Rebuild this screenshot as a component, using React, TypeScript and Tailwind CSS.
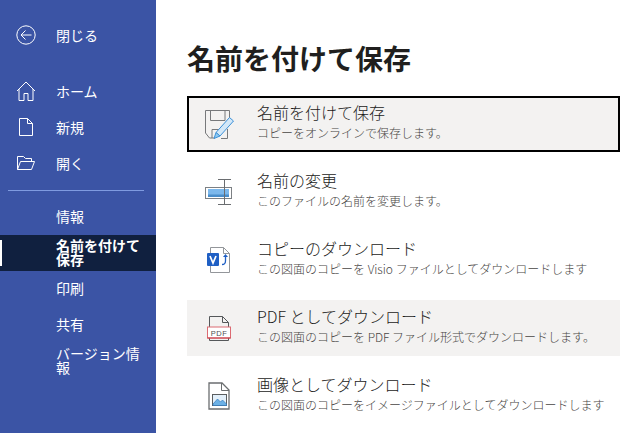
const font = { fontFamily: '"Noto Sans CJK JP", "Noto Sans", sans-serif' };

const stroke = "#ffffff";

const CloseIcon = () => (
  <svg width="20" height="20" viewBox="0 0 20 20" fill="none" stroke={stroke} strokeWidth="1">
    <circle cx="10" cy="10" r="9.2" />
    <path d="M15.500 10H5M9.500 5.500L5 10l4.500 4.500" />
  </svg>
);
const HomeIcon = () => (
  <svg width="20" height="20" viewBox="0 0 20 20" fill="none" stroke={stroke} strokeWidth="1">
    <path d="M1 10L10 1l9 9M3 8v11.500h5v-7h4v7h5V8" />
  </svg>
);
const NewIcon = () => (
  <svg width="16" height="20" viewBox="0 0 16 20" fill="none" stroke={stroke} strokeWidth="1">
    <path d="M1.500 1.500h8l5 5v12h-13zM9.500 1.500v5h5" />
  </svg>
);
const OpenIcon = () => (
  <svg width="20" height="16" viewBox="0 0 20 16" fill="none" stroke={stroke} strokeWidth="1">
    <path d="M1.500 14.500v-13h6l2 2h6v3M1.500 14.500l3-8h14l-3 8z" />
  </svg>
);

const SaveAsIcon = () => (
  <svg width="30" height="30" viewBox="0 0 30 30" fill="none">
    <path d="M1.500 1.500h24V11M1.500 1.500V24l4 5H11" stroke="#77797b" />
    <path d="M6.500 2v9.500H21V2M8 29v-8.500h9M23.500 20v9.500H17" stroke="#77797b" />
    <path d="M25.500 8.500l4 3.500L16 27l-4-3.500z" fill="#d3e8f8" stroke="#3c91d8" />
    <path d="M12 23.500l4 3.500-6 2.500z" fill="#8ec9f0" stroke="#3c91d8" />
  </svg>
);
const RenameIcon = () => (
  <svg width="28" height="28" viewBox="0 0 28 28" fill="none">
    <rect x="0.500" y="9.500" width="26" height="11" fill="#ffffff" stroke="#7c8084" />
    <rect x="3" y="11" width="21" height="8" fill="#7cb8ec" />
    <path d="M3 16.500h21V19H3z" fill="#4a8ecb" />
    <path d="M19.500 1.500v25M13 1.500h13M13 26.500h13" stroke="#6a6d70" />
  </svg>
);
const VisioIcon = () => (
  <svg width="24" height="28" viewBox="0 0 24 28" fill="none">
    <path d="M3.500 1.500h13l6 6v19h-19z" fill="#ffffff" stroke="#93969a" />
    <path d="M16.500 1.500v6h6" stroke="#93969a" />
    <rect x="0" y="7" width="12" height="13" rx="1" fill="#1f5fc4" />
    <path d="M3 10l3 7 3-7" stroke="#ffffff" strokeWidth="1.700" />
    <path d="M16 11l2.500-3 2.500 3z" fill="#1f5fc4" />
    <path d="M18.500 10v5c0 2-1 3.500-3.500 3.500" stroke="#1f5fc4" strokeWidth="1.300" />
  </svg>
);
const PdfIcon = () => (
  <svg width="24" height="27" viewBox="0 0 24 27" fill="none">
    <path d="M2.500 12V1.500h13l6 6V12M15.500 1.500v6h6M2.500 23v2.500h19V23" stroke="#55585a" />
    <rect x="0.500" y="12" width="23" height="11" fill="#ffffff" stroke="#dc6a72" />
    <path d="M0.500 23h23" stroke="#c8323e" />
    <text x="12" y="20.500" textAnchor="middle" fontSize="7.500" fontFamily="Liberation Sans" letterSpacing="0.5" fill="#505050">PDF</text>
  </svg>
);
const ImageIcon = () => (
  <svg width="22" height="28" viewBox="0 0 22 28" fill="none">
    <path d="M1 1h13l7 7v19H1z" fill="#ffffff" stroke="#6b6e70" strokeWidth="1.300" />
    <path d="M13.500 1v7.500H21" stroke="#6b6e70" />
    <rect x="4.500" y="12.500" width="14" height="11" fill="#e3f0fa" stroke="#5b5e60" />
    <path d="M5 22l4.500-5 3 3 2-2 4 4v1.500H5z" fill="#6cb1e6" stroke="#2f78bd" strokeWidth="0.700" />
  </svg>
);

const NavIcon = ({ icon, label }: { icon: React.ReactNode; label: string }) => (
  <div className="flex h-9 items-center pb-[2px]">
    <div className="flex w-[56px] justify-center pr-[5px]">{icon}</div>
    <span className="text-sm leading-[14px] text-white">{label}</span>
  </div>
);

const NavText = ({ label, active }: { label: string; active?: boolean }) => (
  <div className={active ? "relative flex h-9 items-center bg-[#10203f] pb-[2px] pl-[56px]" : "flex h-9 items-center pb-[2px] pl-[56px]"}>
    {active && <div className="absolute left-0 top-[5px] h-[26px] w-[2px] bg-white" />}
    <span className={active ? "w-[90px] text-sm leading-[14px] font-bold text-white" : "w-[90px] text-sm leading-[14px] text-white"}>{label}</span>
  </div>
);

const rows = [
  { title: "名前を付けて保存", sub: "コピーをオンラインで保存します。", icon: <SaveAsIcon />, style: "border-black bg-[#f3f2f1]" },
  { title: "名前の変更", sub: "このファイルの名前を変更します。", icon: <RenameIcon />, style: "border-transparent" },
  { title: "コピーのダウンロード", sub: "この図面のコピーを Visio ファイルとしてダウンロードします", icon: <VisioIcon />, style: "border-transparent" },
  { title: "PDF としてダウンロード", sub: "この図面のコピーを PDF ファイル形式でダウンロードします。", icon: <PdfIcon />, style: "border-transparent bg-[#f3f2f1]" },
  { title: "画像としてダウンロード", sub: "この図面のコピーをイメージファイルとしてダウンロードします", icon: <ImageIcon />, style: "border-transparent" },
];

export default function App() {
  return (
    <div className="flex h-[433px] w-[620px] overflow-hidden bg-white" style={font}>
      <div className="flex w-[156px] shrink-0 flex-col bg-[#3b54a5] pt-[18px]">
        <NavIcon icon={<CloseIcon />} label="閉じる" />
        <div className="mt-[20px]">
          <NavIcon icon={<HomeIcon />} label="ホーム" />
          <NavIcon icon={<NewIcon />} label="新規" />
          <NavIcon icon={<OpenIcon />} label="開く" />
        </div>
        <div className="mx-2 mt-[8px] mb-[8px] h-px w-[136px] bg-[#7f9be0]" />
        <NavText label="情報" />
        <NavText label="名前を付けて保存" active />
        <NavText label="印刷" />
        <NavText label="共有" />
        <NavText label="バージョン情報" />
      </div>
      <div className="min-w-0 flex-1 pl-[31px] pt-[39px]">
        <h1 className="text-[28px] leading-[38px] font-bold text-[#201f1e]">名前を付けて保存</h1>
        <div className="mt-[19px] flex flex-col gap-3">
          {rows.map((row) => (
            <div key={row.title} className={"flex h-14 items-center border-2 " + row.style}>
              <div className="flex w-[68px] shrink-0 justify-center pr-[8px]">{row.icon}</div>
              <div className="whitespace-nowrap pb-[2px]">
                <div className="text-base leading-[20px] font-light text-[#1b1a19]">{row.title}</div>
                <div className="text-xs leading-[22px] font-light text-[#484644]">{row.sub}</div>
              </div>
            </div>
          ))}
        </div>
      </div>
    </div>
  );
}
